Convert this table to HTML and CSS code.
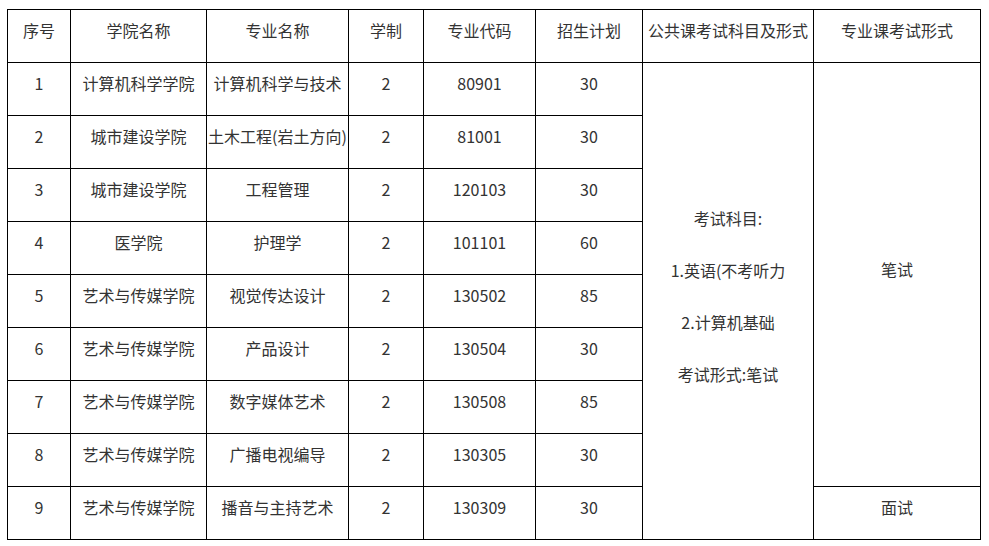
FILE: index.html
```html
<!DOCTYPE html>
<html lang="zh-CN">
<head>
<meta charset="utf-8">
<title>招生计划</title>
<link rel="stylesheet" href="styles.css">
</head>
<body>
<table class="plan">
  <colgroup>
    <col class="c1"><col class="c2"><col class="c3"><col class="c4">
    <col class="c5"><col class="c6"><col class="c7"><col class="c8">
  </colgroup>
  <tbody>
    <tr>
      <td>序号</td><td>学院名称</td><td>专业名称</td><td>学制</td><td>专业代码</td><td>招生计划</td><td>公共课考试科目及形式</td><td>专业课考试形式</td>
    </tr>
    <tr>
      <td>1</td><td>计算机科学学院</td><td>计算机科学与技术</td><td>2</td><td>80901</td><td>30</td>
      <td rowspan="9" class="exam">
        <div class="exam-lines">
          <p>考试科目:</p>
          <p>1.英语(不考听力</p>
          <p>2.计算机基础</p>
          <p>考试形式:笔试</p>
        </div>
      </td>
      <td rowspan="8">笔试</td>
    </tr>
    <tr><td>2</td><td>城市建设学院</td><td>土木工程(岩土方向)</td><td>2</td><td>81001</td><td>30</td></tr>
    <tr><td>3</td><td>城市建设学院</td><td>工程管理</td><td>2</td><td>120103</td><td>30</td></tr>
    <tr><td>4</td><td>医学院</td><td>护理学</td><td>2</td><td>101101</td><td>60</td></tr>
    <tr><td>5</td><td>艺术与传媒学院</td><td>视觉传达设计</td><td>2</td><td>130502</td><td>85</td></tr>
    <tr><td>6</td><td>艺术与传媒学院</td><td>产品设计</td><td>2</td><td>130504</td><td>30</td></tr>
    <tr><td>7</td><td>艺术与传媒学院</td><td>数字媒体艺术</td><td>2</td><td>130508</td><td>85</td></tr>
    <tr><td>8</td><td>艺术与传媒学院</td><td>广播电视编导</td><td>2</td><td>130305</td><td>30</td></tr>
    <tr><td>9</td><td>艺术与传媒学院</td><td>播音与主持艺术</td><td>2</td><td>130309</td><td>30</td><td>面试</td></tr>
  </tbody>
</table>
</body>
</html>
```
FILE: styles.css
```css
html, body {
  margin: 0;
  background: #ffffff;
}
body {
  padding: 9px 0 0 7px;
  font-family: "Noto Sans CJK SC", "Noto Sans", sans-serif;
  font-size: 16px;
  color: #333333;
}
.plan {
  border-collapse: collapse;
  table-layout: fixed;
  width: 973px;
}
.c1 { width: 63px; }
.c2 { width: 136px; }
.c3 { width: 142px; }
.c4 { width: 75px; }
.c5 { width: 112px; }
.c6 { width: 107px; }
.c7 { width: 171px; }
.c8 { width: 167px; }
.plan tr {
  height: 53px;
}
.plan td {
  border: 1px solid #000000;
  text-align: center;
  vertical-align: middle;
  padding: 0 0 12px 0;
  white-space: nowrap;
  line-height: 26px;
}
.plan td.exam {
  padding: 0 0 10px 0;
}
.exam-lines {
  display: flex;
  flex-direction: column;
  gap: 26px;
}
.exam-lines p {
  margin: 0;
  height: 26px;
}
```
